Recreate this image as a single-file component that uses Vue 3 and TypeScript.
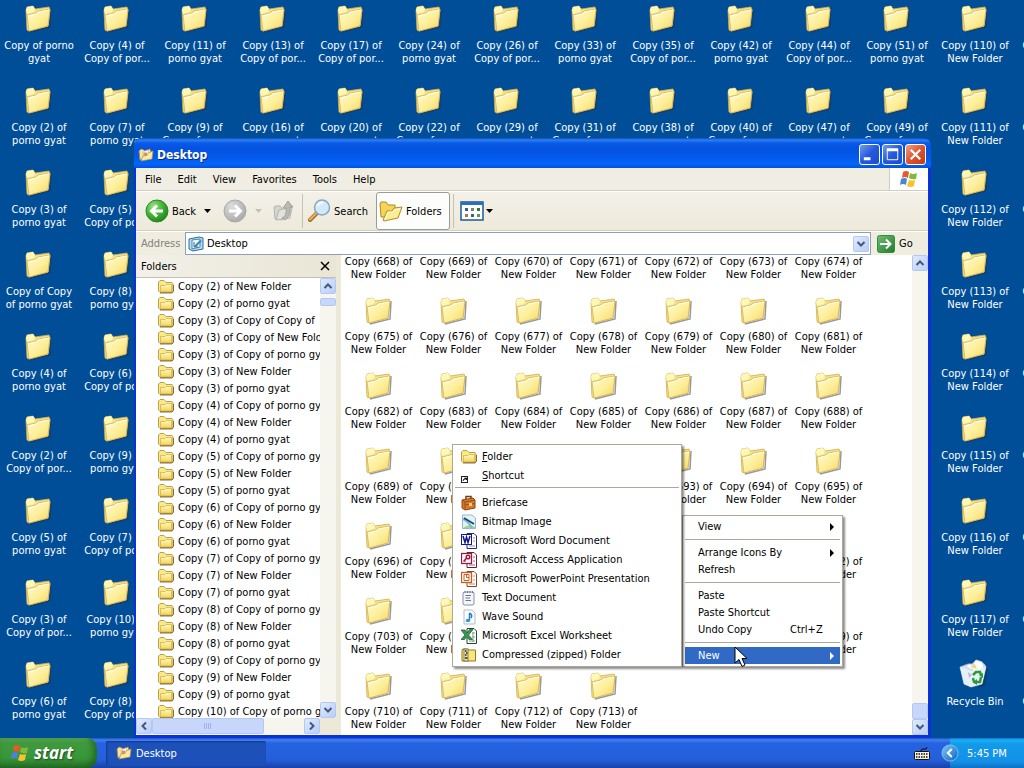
<script setup lang="ts">
import { ref } from 'vue'

type Kind = 'pg' | 'cp' | 'nf'

const second: Record<Kind, string> = { pg: 'porno gyat', cp: 'Copy of por...', nf: 'New Folder' }

function label(n: number, kind: Kind): string {
  return `Copy (${n}) of\n${second[kind]}`
}

const desktopColumns: string[][] = [
  [
    'Copy of porno\ngyat',
    label(2, 'pg'),
    label(3, 'pg'),
    'Copy of Copy\nof porno gyat',
    label(4, 'pg'),
    label(2, 'cp'),
    label(5, 'pg'),
    label(3, 'cp'),
    label(6, 'pg'),
  ],
  [
    label(4, 'cp'),
    label(7, 'pg'),
    label(5, 'cp'),
    label(8, 'pg'),
    label(6, 'cp'),
    label(9, 'pg'),
    label(7, 'cp'),
    label(10, 'pg'),
    label(8, 'cp'),
  ],
  [label(11, 'pg'), label(9, 'cp')],
  [label(13, 'cp'), label(16, 'pg')],
  [label(17, 'cp'), label(20, 'pg')],
  [label(24, 'pg'), label(22, 'cp')],
  [label(26, 'cp'), label(29, 'pg')],
  [label(33, 'pg'), label(31, 'cp')],
  [label(35, 'cp'), label(38, 'pg')],
  [label(42, 'pg'), label(40, 'cp')],
  [label(44, 'cp'), label(47, 'pg')],
  [label(51, 'pg'), label(49, 'cp')],
  [110, 111, 112, 113, 114, 115, 116, 117].map((n) => label(n, 'nf')).concat('Recycle Bin'),
  [11, 12, 13, 14, 15, 16, 17, 18, 19].map((n) => label(n, 'nf')),
]

const tree: string[] = [
  'Copy (2) of New Folder',
  'Copy (2) of porno gyat',
  'Copy (3) of Copy of Copy of',
  'Copy (3) of Copy of New Folder',
  'Copy (3) of Copy of porno gyat',
  'Copy (3) of New Folder',
  'Copy (3) of porno gyat',
]
for (let n = 4; n <= 9; n++) {
  tree.push(`Copy (${n}) of Copy of porno gyat`, `Copy (${n}) of New Folder`, `Copy (${n}) of porno gyat`)
}
tree.push('Copy (10) of Copy of porno gyat')

const files = Array.from({ length: 46 }, (_, i) => label(668 + i, 'nf'))

const menus = ['File', 'Edit', 'View', 'Favorites', 'Tools', 'Help']
const address = ref('Desktop')

const newItems = [
  { icon: 'i-briefcase', text: 'Briefcase' },
  { icon: 'i-bitmap', text: 'Bitmap Image' },
  { icon: 'i-word', text: 'Microsoft Word Document' },
  { icon: 'i-access', text: 'Microsoft Access Application' },
  { icon: 'i-ppt', text: 'Microsoft PowerPoint Presentation' },
  { icon: 'i-text', text: 'Text Document' },
  { icon: 'i-wave', text: 'Wave Sound' },
  { icon: 'i-excel', text: 'Microsoft Excel Worksheet' },
  { icon: 'i-zip', text: 'Compressed (zipped) Folder' },
]
</script>

<template>
  <div class="screen">
    <svg class="defs" aria-hidden="true">
      <defs>
        <linearGradient id="g-folder" x1="0" y1="0" x2="1" y2="1">
          <stop offset="0" stop-color="#fffcd2" />
          <stop offset="0.55" stop-color="#fdee98" />
          <stop offset="1" stop-color="#f6d564" />
        </linearGradient>
        <linearGradient id="g-small" x1="0" y1="0" x2="0" y2="1">
          <stop offset="0" stop-color="#fffabc" />
          <stop offset="1" stop-color="#f4d25a" />
        </linearGradient>
        <radialGradient id="g-green" cx="0.35" cy="0.3" r="0.8">
          <stop offset="0" stop-color="#9be58a" />
          <stop offset="0.5" stop-color="#44b336" />
          <stop offset="1" stop-color="#1c7a18" />
        </radialGradient>
        <radialGradient id="g-gray" cx="0.35" cy="0.3" r="0.8">
          <stop offset="0" stop-color="#dedede" />
          <stop offset="1" stop-color="#a4a4a4" />
        </radialGradient>
        <linearGradient id="g-go" x1="0" y1="0" x2="1" y2="1">
          <stop offset="0" stop-color="#6cc070" />
          <stop offset="1" stop-color="#237a2c" />
        </linearGradient>
        <linearGradient id="g-tray" x1="0" y1="0" x2="1" y2="1">
          <stop offset="0" stop-color="#7cc8fa" />
          <stop offset="1" stop-color="#0d62bc" />
        </linearGradient>
        <symbol id="i-folder-big" viewBox="0 0 32 32">
          <path d="M7 29 L27 24 L28 6" fill="none" stroke="#2a3440" stroke-opacity="0.5" stroke-width="1.500" />
          <path d="M3 7 L4 4 L10 3 L12 6 L26 4 L27 7 L25 23 L6 28 L4 27 Z" fill="#f6e186" stroke="#cfae52" stroke-width="0.8" />
          <path d="M3 7 L4 4 L10 3 L12 6 L11 9 L4 11 Z" fill="#fdf8b8" />
          <path d="M4 12 L13 10 L15 8 L27 6 L25 23 L6 28 Z" fill="url(#g-folder)" stroke="#d3b35a" stroke-width="0.8" />
          <path d="M5 13 L13 11 L16 9 L26 7" fill="none" stroke="#fffef0" stroke-width="1" />
        </symbol>
        <symbol id="i-folder" viewBox="0 0 16 16">
          <path d="M0.500 12 V3 L2 1.500 H6 L8 3.500 H14 L15 5 V12 L14 13.500 H2 Z" fill="#fae988" stroke="#b8963c" stroke-width="0.9" />
          <path d="M2.500 13 V6.500 H7 L8 5.500 H13.500 V13 Z" fill="url(#g-small)" stroke="#cfaa48" stroke-width="0.7" />
          <path d="M2 14 H14 L15.500 12.500 V6" fill="none" stroke="#7c6424" stroke-width="0.9" />
        </symbol>
        <symbol id="i-open" viewBox="0 0 16 16">
          <path d="M2 13 L1 4 L3 2 L6 3 L7 4 L12 2 L13 5" fill="#f6e69a" stroke="#a98a35" stroke-width="0.8" />
          <path d="M5 5 L10 3 L11 9 H5 Z" fill="#fff" stroke="#bbb" stroke-width="0.6" />
          <path d="M5.500 5.500 H9 V9 H5.500 Z" fill="#e58a68" />
          <path d="M3 14 L5 9 L9 8.500 L10 6 L15 4 L14 12 Z" fill="#fbeaa4" stroke="#b5933c" stroke-width="0.7" />
        </symbol>
        <symbol id="i-folders" viewBox="0 0 24 24">
          <path d="M2 18 L1 5 L2 3 H7 L9 6 H16 V18 Z" fill="#f5d559" stroke="#b08a24" />
          <path d="M4 21 L8 12 H13 L15 9 L23 8 L19 19 L5 22 Z" fill="#fcec94" stroke="#b08a24" />
          <path d="M6 20 L9 13 H13 L15 11 L21 10" fill="none" stroke="#fffbd8" />
        </symbol>
        <symbol id="i-flag" viewBox="0 0 20 20">
          <path d="M4 3 Q7 1 10 3 L9 9 Q6 7 3 9 Z" fill="#e9572b" />
          <path d="M11 4 Q14 6 18 4 L17 10 Q13 11 10 9 Z" fill="#84b83c" />
          <path d="M2 10 Q6 8 8 10 L7 16 Q4 14 1 16 Z" fill="#4a83dc" />
          <path d="M10 11 Q13 12 16 11 L15 17 Q11 19 8 17 Z" fill="#f6c22e" />
        </symbol>
        <symbol id="i-back" viewBox="0 0 24 24">
          <circle cx="12" cy="12" r="11" fill="url(#g-green)" stroke="#2b8a24" />
          <path d="M18 12 H7 M12 6.5 L6.5 12 L12 17.5" fill="none" stroke="#fff" stroke-width="3" />
        </symbol>
        <symbol id="i-forward" viewBox="0 0 24 24">
          <circle cx="12" cy="12" r="11" fill="url(#g-gray)" stroke="#ababab" />
          <path d="M6 12 H17 M12 6.5 L17.5 12 L12 17.5" fill="none" stroke="#fff" stroke-width="3" />
        </symbol>
        <symbol id="i-up" viewBox="0 0 24 24">
          <path d="M3 20 L2 8 L4 7 L8 7 L10 9 V21 Z" fill="#d6d6d0" stroke="#b4b4ae" />
          <path d="M4 21 L7 11 L20 8 L18 19 Z" fill="#e2e2dc" stroke="#b4b4ae" />
          <path d="M10 19 Q15 17 14 9 H11 L16 2 L21 8 H18 Q19 17 13 21 Z" fill="#b9b9b4" stroke="#9a9a96" stroke-width="0.8" />
        </symbol>
        <symbol id="i-search" viewBox="0 0 24 24">
          <path d="M10 14 L3 21" stroke="#a86a22" stroke-width="4" stroke-linecap="round" />
          <path d="M10 13.5 L3 20.5" stroke="#e9b25f" stroke-width="2" stroke-linecap="round" />
          <circle cx="15" cy="8.500" r="7.500" fill="#cfeafa" stroke="#8aa5bd" stroke-width="1.500" />
          <path d="M10.500 7 Q12 3.500 16 3.500" fill="none" stroke="#fff" stroke-width="2" />
        </symbol>
        <symbol id="i-views" viewBox="0 0 24 20">
          <rect x="1" y="1" width="22" height="18" fill="#fff" stroke="#1b5a94" stroke-width="1.500" />
          <rect x="1" y="1" width="22" height="3" fill="#2a72b8" />
          <path d="M5 7 h3 v3 h-3 z M11 13 h3 v3 h-3 z" fill="#3f5c9a" />
          <path d="M11 7 h3 v3 h-3 z M17 13 h3 v3 h-3 z" fill="#6a8c76" />
          <path d="M17 7 h3 v3 h-3 z" fill="#2d7d2d" />
          <path d="M5 13 h3 v3 h-3 z" fill="#c4703c" />
        </symbol>
        <symbol id="i-desk" viewBox="0 0 16 16">
          <path d="M1 3 L11 1 L15 2 V13 L5 15 L1 13 Z" fill="#b8dcf2" stroke="#2c6e98" />
          <path d="M4 4 L12 3 V11 L4 13 Z" fill="#f2faff" stroke="#2c6e98" stroke-width="0.8" />
          <path d="M6 10 L12 4 L14 5 L8 11 Z" fill="#3c86b4" />
          <path d="M6 6 V11 H10" fill="none" stroke="#2c6e98" />
        </symbol>
        <symbol id="i-go" viewBox="0 0 18 18">
          <rect x="0.5" y="0.5" width="17" height="17" rx="2" fill="url(#g-go)" stroke="#3a8a42" />
          <path d="M3 9 H13 M9 4.500 L13.500 9 L9 13.500" fill="none" stroke="#fff" stroke-width="2" />
        </symbol>
        <symbol id="i-bin" viewBox="0 0 32 32">
          <path d="M25 8 L29 9 L26 27 L19 29" fill="#16304a" fill-opacity="0.5" />
          <path d="M1 8 L9 5 L13 5 L17 1 L23 3 L26 6 L27 8 L23 25 L12 28 L5 25 Z" fill="#d5e4ee" stroke="#a6bccb" stroke-width="0.8" />
          <path d="M7 8 L10 5 L14 6 L17 1 L23 3 L25 8 L19 13 Z" fill="#fff" stroke="#b8c6d0" stroke-width="0.6" />
          <path d="M11 8 L16 5 L18 10 Z" fill="#f3d489" />
          <path d="M1 8 L12 12 L27 8 L23 25 L12 28 L5 25 Z" fill="#e8f2f8" fill-opacity="0.85" />
          <path d="M9 13 L13 16 L10 19 Z" fill="#c6b4d8" />
          <path d="M14 16 L17 13 L21 13 L22 16 M22 18 L21 23 L18 23 M14 19 L15 23 L17 24" fill="none" stroke="#2c9a3a" stroke-width="2.500" />
          <path d="M20 16 L24 14 L24 19 Z M18 20 L18 26 L14 23 Z" fill="#2c9a3a" />
        </symbol>
        <symbol id="i-shortcut" viewBox="0 0 16 16">
          <rect x="0.5" y="8.500" width="6" height="6" fill="#fff" stroke="#222" />
          <path d="M2 13 Q2 11 4 11 M3.500 10 H5.500 V12 Z" fill="#000" stroke="#000" stroke-width="0.7" />
        </symbol>
        <symbol id="i-briefcase" viewBox="0 0 16 16">
          <path d="M5 4 V1.500 H10 V3.500" fill="none" stroke="#7c3a10" stroke-width="1.500" />
          <path d="M1 5 L12 3 L14 5 V13 L4 15 L1 13 Z" fill="#d9782c" stroke="#8b430f" />
          <path d="M1 5 L4 7 L14 5 M4 7 V15 M4 10 L14 8.500" fill="none" stroke="#9c4e18" />
          <rect x="8" y="8" width="3" height="3" fill="#f6d27c" />
        </symbol>
        <symbol id="i-bitmap" viewBox="0 0 16 16">
          <path d="M1.500 1 H11 L14.500 4 V14.500 H1.500 Z" fill="#e2f2fb" stroke="#9ab6cc" />
          <path d="M2 14 Q7 9 14 13 V14 Z" fill="#a4d488" />
          <path d="M2 5 Q7 7 11 14" fill="none" stroke="#72b8e6" stroke-width="2" />
          <path d="M3 4 L13 10" stroke="#24445c" stroke-width="1.800" />
        </symbol>
        <symbol id="i-word" viewBox="0 0 16 16">
          <path d="M6 0.5 H13 L15.500 3 V15.500 H6 Z" fill="#fff" stroke="#222a70" />
          <path d="M12 5 H14 M12 8 H14 M8 13 H14" stroke="#8a90bc" />
          <rect x="0.5" y="1.500" width="10" height="10" fill="#fff" stroke="#17188c" />
          <path d="M2 3 L4 9.500 L5.500 4 L7 9.500 L9 3" fill="none" stroke="#17188c" stroke-width="1.500" />
        </symbol>
        <symbol id="i-access" viewBox="0 0 16 16">
          <path d="M6 0.5 H13 L15.500 3 V15.500 H6 Z" fill="#fff" stroke="#5a2438" />
          <path d="M8 13 H14 M12 5 H14 M12 9 H14" stroke="#b06080" />
          <rect x="0.5" y="1.500" width="10" height="10" fill="#fff" stroke="#a01840" stroke-width="1.300" />
          <circle cx="7" cy="5" r="1.800" fill="none" stroke="#a01840" stroke-width="1.500" />
          <path d="M5.500 6 L2.500 9.500 M3 8 L4.500 9.500" stroke="#a01840" stroke-width="1.300" />
        </symbol>
        <symbol id="i-ppt" viewBox="0 0 16 16">
          <path d="M6 0.5 H13 L15.500 3 V15.500 H6 Z" fill="#fff" stroke="#8c4420" />
          <path d="M8 13 H14 M12 5 H14 M12 9 H14" stroke="#c88860" />
          <rect x="0.5" y="1.500" width="10" height="10" fill="#fff" stroke="#cc5a1c" stroke-width="1.300" />
          <path d="M3 3.500 H8 V9.500 H3 Z M5.500 3.500 V6.500 H8" fill="none" stroke="#cc5a1c" />
        </symbol>
        <symbol id="i-text" viewBox="0 0 16 16">
          <path d="M3 2 H12 L13 3 V14 L12 15 H3 L2 14 V3 Z" fill="#f2f5fa" stroke="#8790a6" />
          <path d="M4 1 V3 M6.500 1 V3 M9 1 V3 M11.500 1 V3" stroke="#6a7590" />
          <path d="M4.500 5.500 H10 M4.500 8 H9 M4.500 10.500 H10" stroke="#6d7590" />
        </symbol>
        <symbol id="i-wave" viewBox="0 0 16 16">
          <path d="M3 1 H11 L14 4 V15 H3 Z" fill="#fafdff" stroke="#b5bcc8" />
          <path d="M8.500 4 V11 M8.500 4 Q12 6 10 9" fill="none" stroke="#2a7fc6" stroke-width="1.500" />
          <ellipse cx="7" cy="11.500" rx="2.200" ry="1.700" fill="#2a9bd6" />
        </symbol>
        <symbol id="i-excel" viewBox="0 0 16 16">
          <path d="M6 0.5 H13 L15.500 3 V15.500 H6 Z" fill="#fff" stroke="#24482c" />
          <path d="M11 5 H14 M11 9 H14 M8 13 H14 M12 4 V14" stroke="#7ea488" />
          <path d="M0 2 H4 L6 5 L8.500 1.500 H12 L7.500 7 L11.500 11.500 H8 L5.500 9 L3.500 11.500 H0 L4 7 Z" fill="#3c9656" stroke="#1d6434" stroke-width="0.8" />
        </symbol>
        <symbol id="i-zip" viewBox="0 0 16 16">
          <path d="M1 14 V3 L2 2 H6 L8 3 H14.500 V14 Z" fill="#f9e678" stroke="#97761c" />
          <rect x="3" y="2" width="4" height="12" fill="#efe8b8" stroke="#5c5226" stroke-width="0.7" />
          <path d="M4 4 H5.500 M5 6 H6.500 M4 8 H5.500 M4 11 H6.500" stroke="#222" stroke-width="1.300" />
        </symbol>
        <symbol id="i-keyboard" viewBox="0 0 16 16">
          <path d="M7 6 V5 L9 4 L12 4 L13 2" fill="none" stroke="#111" />
          <rect x="0.500" y="6.500" width="15" height="8" rx="1" fill="#f5f0dc" stroke="#111" />
          <path d="M2 9 H14 M2 12 H14" stroke="#111" stroke-width="1.500" stroke-dasharray="1.500 1" />
        </symbol>
        <symbol id="i-tray" viewBox="0 0 20 20">
          <circle cx="10" cy="10" r="9" fill="url(#g-tray)" stroke="#8fd0fa" stroke-width="0.8" />
          <path d="M12 5.500 L7.500 10 L12 14.500" fill="none" stroke="#fff" stroke-width="2.200" />
        </symbol>
        <symbol id="i-chev" viewBox="0 0 10 10">
          <path d="M1.500 7 L5 3.500 L8.500 7" fill="none" stroke="#42597c" stroke-width="2" />
        </symbol>
        <symbol id="i-tri" viewBox="0 0 8 8">
          <path d="M2 0 L6 4 L2 8 Z" fill="currentColor" />
        </symbol>
      </defs>
    </svg>

    <main class="desktop">
      <ul v-for="(col, c) in desktopColumns" :key="c" class="desk-col">
        <li v-for="(item, r) in col" :key="r" class="desk-item">
          <svg class="big"><use :href="item === 'Recycle Bin' ? '#i-bin' : '#i-folder-big'" /></svg>
          <span class="caption">{{ item }}</span>
        </li>
      </ul>
    </main>

    <section class="window">
      <header class="titlebar">
        <svg class="small"><use href="#i-open" /></svg>
        <h1>Desktop</h1>
        <button class="cap" aria-label="Minimize"><svg viewBox="0 0 20 20"><path d="M4 14.500 H11" stroke="#fff" stroke-width="3" /></svg></button>
        <button class="cap" aria-label="Maximize"><svg viewBox="0 0 20 20"><path d="M4.500 5 V15.500 H15.500 V5" fill="none" stroke="#fff" /><path d="M4 5 H16" stroke="#fff" stroke-width="3" /></svg></button>
        <button class="cap close" aria-label="Close"><svg viewBox="0 0 20 20"><path d="M5 5 L15 15 M15 5 L5 15" stroke="#fff" stroke-width="2.500" /></svg></button>
      </header>

      <div class="frame">
        <nav class="menubar">
          <button v-for="m in menus" :key="m">{{ m }}</button>
          <span class="brand"><svg class="flag"><use href="#i-flag" /></svg></span>
        </nav>

        <div class="toolbar">
          <button class="tool back"><svg class="mid"><use href="#i-back" /></svg>Back</button>
          <button class="drop" aria-label="Back history"></button>
          <button class="tool fwd" aria-label="Forward"><svg class="mid"><use href="#i-forward" /></svg></button>
          <button class="drop pale" aria-label="Forward history"></button>
          <button class="tool up" aria-label="Up"><svg class="mid"><use href="#i-up" /></svg></button>
          <span class="bar"></span>
          <button class="tool search"><svg class="mid"><use href="#i-search" /></svg>Search</button>
          <button class="tool pressed"><svg class="mid"><use href="#i-folders" /></svg>Folders</button>
          <span class="bar"></span>
          <button class="tool views" aria-label="Views"><svg class="viewicon"><use href="#i-views" /></svg><i class="drop"></i></button>
        </div>

        <div class="address">
          <label for="addr">Address</label>
          <div class="combo">
            <svg class="small"><use href="#i-desk" /></svg>
            <input id="addr" v-model="address" type="text" />
            <button class="sb" aria-label="Show addresses"><svg class="chev down"><use href="#i-chev" /></svg></button>
          </div>
          <button class="go"><svg class="goicon"><use href="#i-go" /></svg>Go</button>
        </div>

        <div class="body">
          <aside class="pane">
            <div class="pane-head">
              <h2>Folders</h2>
              <button aria-label="Close folders pane"><svg viewBox="0 0 10 10"><path d="M1 1 L9 9 M9 1 L1 9" stroke="#000" stroke-width="1.500" /></svg></button>
            </div>
            <div class="pane-body">
              <ul class="tree">
                <li v-for="(t, i) in tree" :key="i"><svg class="small"><use href="#i-folder" /></svg>{{ t }}</li>
              </ul>
              <div class="scroll vertical">
                <button class="sb" aria-label="Scroll up"><svg class="chev"><use href="#i-chev" /></svg></button>
                <span class="thumb tiny"></span>
                <span class="space"></span>
                <button class="sb" aria-label="Scroll down"><svg class="chev down"><use href="#i-chev" /></svg></button>
              </div>
              <div class="scroll horizontal">
                <button class="sb" aria-label="Scroll left"><svg class="chev left"><use href="#i-chev" /></svg></button>
                <span class="thumb wide"></span>
                <span class="space"></span>
                <button class="sb" aria-label="Scroll right"><svg class="chev right"><use href="#i-chev" /></svg></button>
              </div>
              <div class="corner"></div>
            </div>
          </aside>
          <div class="splitter"></div>
          <div class="content">
            <ul class="files">
              <li v-for="f in files" :key="f">
                <svg class="big"><use href="#i-folder-big" /></svg>
                <span class="caption">{{ f }}</span>
              </li>
            </ul>
          </div>
          <div class="scroll vertical">
            <button class="sb" aria-label="Scroll up"><svg class="chev"><use href="#i-chev" /></svg></button>
            <span class="space"></span>
            <span class="thumb block"></span>
            <button class="sb" aria-label="Scroll down"><svg class="chev down"><use href="#i-chev" /></svg></button>
          </div>
        </div>
      </div>
    </section>

    <div class="menus">
      <div class="menu sub">
        <button><svg class="small"><use href="#i-folder" /></svg><span><u>F</u>older</span></button>
        <button><svg class="small"><use href="#i-shortcut" /></svg><span><u>S</u>hortcut</span></button>
        <hr />
        <button v-for="n in newItems" :key="n.text"><svg class="small"><use :href="'#' + n.icon" /></svg><span>{{ n.text }}</span></button>
      </div>
      <div class="menu ctx">
        <button><span>View</span><svg class="tri"><use href="#i-tri" /></svg></button>
        <hr />
        <button><span>Arrange Icons By</span><svg class="tri"><use href="#i-tri" /></svg></button>
        <button><span>Refresh</span></button>
        <hr />
        <button><span>Paste</span></button>
        <button><span>Paste Shortcut</span></button>
        <button><span>Undo Copy</span><kbd>Ctrl+Z</kbd></button>
        <hr />
        <button class="on"><span>New</span><svg class="tri"><use href="#i-tri" /></svg></button>
        <svg class="cursor" viewBox="0 0 14 22"><path d="M1 1 V17 L5 13.500 L8 20.500 L11 19 L8 12.500 H13 Z" fill="#fff" stroke="#000" /></svg>
      </div>
    </div>

    <footer class="taskbar">
      <button class="start"><svg class="flag"><use href="#i-flag" /></svg>start</button>
      <button class="task"><svg class="small"><use href="#i-open" /></svg>Desktop</button>
      <svg class="small kb"><use href="#i-keyboard" /></svg>
      <div class="tray">
        <svg class="traybtn"><use href="#i-tray" /></svg>
        <time>5:45 PM</time>
      </div>
    </footer>
  </div>
</template>

<style>
body {
  margin: 0;
  overflow: hidden;
}
</style>

<style scoped>
.screen {
  position: relative;
  display: flex;
  flex-direction: column;
  height: 100vh;
  overflow: hidden;
  background: #004e98;
  color: #000;
  font: 11px/13px Tahoma, "DejaVu Sans Condensed", "DejaVu Sans", sans-serif;
}
.defs {
  position: absolute;
  width: 0;
  height: 0;
}
ul {
  margin: 0;
  padding: 0;
  list-style: none;
}
button {
  margin: 0;
  padding: 0;
  border: 0;
  background: none;
  color: inherit;
  font: inherit;
}
svg {
  flex: none;
  display: block;
}
.small { width: 16px; height: 16px; }
.mid { width: 24px; height: 24px; }
.big { width: 32px; height: 32px; }
.flag { width: 20px; height: 20px; }

.desktop {
  flex: 1;
  min-height: 0;
  display: flex;
  overflow: hidden;
}
.desk-col {
  flex: none;
  width: 78px;
}
.desk-item {
  display: flex;
  flex-direction: column;
  align-items: center;
  gap: 4px;
  height: 79px;
  padding-top: 3px;
  color: #fff;
}
.caption {
  white-space: pre;
  text-align: center;
}

.window {
  position: absolute;
  top: 138px;
  left: 134px;
  right: 93px;
  bottom: 30px;
  display: flex;
  flex-direction: column;
  border-radius: 8px 8px 0 0;
  background: #0a32d8;
  overflow: hidden;
}
.titlebar {
  display: flex;
  align-items: center;
  gap: 2px;
  height: 30px;
  padding: 3px 5px 0 4px;
  box-sizing: border-box;
  background: linear-gradient(#0a4cc4 0, #2c80f0 2px, #0a5be8 5px, #0453e0 10px, #0457e8 18px, #0466fb 26px, #0352dc 30px);
}
.titlebar h1 {
  flex: 1;
  margin: 0;
  padding-left: 1px;
  color: #fff;
  font: bold 12px/16px "Trebuchet MS", "DejaVu Sans Condensed", sans-serif;
  text-shadow: 1px 1px #0a2c80;
}
.cap {
  width: 21px;
  height: 21px;
  box-sizing: border-box;
  border: 1px solid #fff;
  border-radius: 3px;
  background: linear-gradient(135deg, #6f9cf2, #2559dc 50%, #1c4bd0);
}
.close {
  background: linear-gradient(135deg, #f0a088, #e0522c 50%, #c23c14);
}
.frame {
  flex: 1;
  min-height: 0;
  display: flex;
  flex-direction: column;
  margin: 0 3px 3px 2px;
  background: #fff;
}
.menubar {
  display: flex;
  align-items: stretch;
  height: 22px;
  padding-left: 1px;
  border-bottom: 1px solid #d0cdc0;
  background: #f0eee3;
}
.menubar button {
  padding: 0 8px;
}
.brand {
  display: flex;
  align-items: center;
  justify-content: center;
  width: 38px;
  margin-left: auto;
  border-left: 1px solid #d0cdbf;
  background: #fff;
}
.toolbar {
  display: flex;
  align-items: center;
  height: 40px;
  padding-left: 9px;
  box-sizing: border-box;
  border-top: 1px solid #fff;
  border-bottom: 1px solid #d4d0c0;
  background: linear-gradient(#f3f1e8, #edeadb);
}
.tool {
  display: flex;
  align-items: center;
  gap: 4px;
}
.back { width: 59px; gap: 3px; }
.drop {
  width: 7px;
  height: 4px;
  background: #000;
  clip-path: polygon(0 0, 100% 0, 50% 100%);
}
.pale { background: #c4c2b8; }
.fwd { margin-left: 12px; }
.fwd + .drop { margin-left: 8px; }
.up { margin: 0 6px 0 10px; }
.bar {
  width: 1px;
  height: 34px;
  background: #c6c3b4;
}
.search { width: 69px; gap: 3px; margin-left: 4px; }
.pressed {
  width: 74px;
  height: 38px;
  box-sizing: border-box;
  gap: 3px;
  margin-right: 3px;
  padding-left: 2px;
  border: 1px solid #9a9c98;
  border-radius: 3px;
  background: #fdfdfb;
}
.views { margin-left: 6px; gap: 2px; }
.viewicon { width: 24px; height: 20px; }
.address {
  display: flex;
  align-items: center;
  height: 24px;
  box-sizing: border-box;
  padding-left: 5px;
  border-top: 1px solid #fff;
  background: #efede0;
  color: #83827a;
}
.address label { width: 44px; }
.combo {
  flex: 1;
  align-self: stretch;
  display: flex;
  align-items: center;
  min-width: 0;
  padding: 0 1px 0 2px;
  border: 1px solid #8ea0b8;
  background: #fff;
}
.combo input {
  flex: 1;
  min-width: 0;
  margin: 0;
  padding: 0 0 0 3px;
  border: 0;
  outline: 0;
  background: transparent;
  color: #000;
  font: inherit;
}
.go {
  display: flex;
  align-items: center;
  gap: 4px;
  width: 51px;
  margin-left: 6px;
  color: #000;
}
.goicon { width: 18px; height: 18px; }
.body {
  flex: 1;
  min-height: 0;
  display: flex;
}
.pane {
  display: flex;
  flex-direction: column;
  width: 200px;
  min-height: 0;
}
.pane-head {
  display: flex;
  align-items: center;
  justify-content: space-between;
  height: 22px;
  padding: 0 6px 0 5px;
  border-bottom: 1px solid #c4c1b2;
  background: linear-gradient(90deg, #f2f0e8, #e9e6d6);
}
.pane-head h2 {
  margin: 0;
  font: inherit;
}
.pane-head svg { width: 10px; height: 10px; }
.pane-body {
  flex: 1;
  min-height: 0;
  display: grid;
  grid-template: minmax(0, 1fr) 17px / minmax(0, 1fr) 16px;
}
.tree {
  overflow: hidden;
}
.tree li {
  display: flex;
  align-items: center;
  gap: 4px;
  height: 17px;
  padding-left: 22px;
  white-space: nowrap;
}
.corner,
.splitter {
  background: #ece9d8;
}
.splitter {
  width: 5px;
}
.content {
  flex: 1;
  min-width: 0;
  display: flex;
  flex-direction: column;
  justify-content: flex-end;
  overflow: hidden;
}
.files {
  display: grid;
  grid-template-columns: repeat(auto-fill, 75px);
  row-gap: 14px;
  padding-bottom: 4px;
}
.files li {
  display: flex;
  flex-direction: column;
  align-items: center;
  gap: 3px;
}
.scroll {
  display: flex;
  background: #f6f5ee;
}
.vertical {
  flex-direction: column;
  width: 16px;
}
.horizontal { height: 17px; }
.space { flex: 1; }
.sb {
  flex: none;
  display: flex;
  align-items: center;
  justify-content: center;
  width: 16px;
  height: 16px;
  box-sizing: border-box;
  border: 1px solid #b4c8f4;
  border-radius: 2px;
  background: linear-gradient(135deg, #e0eafd, #b9cdf8);
}
.chev { width: 10px; height: 10px; }
.down { transform: rotate(180deg); }
.left { transform: rotate(-90deg); }
.right { transform: rotate(90deg); }
.thumb {
  box-sizing: border-box;
  border: 1px solid #b4c8f4;
  border-radius: 2px;
  background: #c8d6fb;
}
.tiny { height: 8px; margin-top: 4px; }
.block { height: 16px; }
.wide {
  width: 112px;
  height: 16px;
  background: repeating-linear-gradient(90deg, #9cb4ec 0, #9cb4ec 1px, transparent 1px, transparent 2px) center / 8px 6px no-repeat, #c8d6fb;
}

.menus {
  position: absolute;
  right: 181px;
  bottom: 101px;
  display: flex;
  align-items: flex-end;
}
.menu {
  display: flex;
  flex-direction: column;
  box-sizing: border-box;
  padding: 2px;
  border: 1px solid #aca899;
  background: #fff;
  box-shadow: 2px 2px 2px rgba(0, 0, 0, 0.45);
}
.menu button {
  display: flex;
  align-items: center;
  text-align: left;
  white-space: nowrap;
}
.menu hr {
  width: 100%;
  margin: 0;
  border: 0;
  box-sizing: border-box;
  background: linear-gradient(#aca899, #aca899) center / 100% 1px no-repeat;
}
.sub {
  z-index: 1;
  width: 230px;
}
.sub button {
  gap: 5px;
  height: 19px;
  padding-left: 6px;
}
.menu.sub hr {
  height: 8px;
  background-position: 0 2px;
}
.ctx {
  position: relative;
  width: 161px;
}
.ctx button {
  justify-content: space-between;
  height: 17px;
  padding: 0 4px 0 13px;
}
.ctx hr { height: 9px; }
.ctx .on {
  background: #316ac5;
  color: #fff;
}
.ctx kbd {
  width: 46px;
  font: inherit;
}
.tri { width: 8px; height: 8px; }
.cursor {
  position: absolute;
  left: 51px;
  bottom: -2px;
  width: 14px;
  height: 22px;
}

.taskbar {
  flex: none;
  display: flex;
  align-items: center;
  height: 30px;
  background: linear-gradient(#1f4fc4 0, #3f82f0 2px, #2663e0 5px, #245edb 22px, #1941a5 30px);
  color: #fff;
}
.start {
  display: flex;
  align-items: center;
  gap: 4px;
  width: 97px;
  height: 30px;
  padding-left: 10px;
  border-radius: 0 10px 10px 0;
  background: linear-gradient(#5aa855 0, #3f9a3e 5px, #389638 20px, #2a7a2c 30px);
  box-shadow: inset -4px -2px 6px rgba(16, 80, 20, 0.6);
  font: italic bold 17px/24px "Open Sans", "Noto Sans", sans-serif;
  text-shadow: 1px 1px 2px #1c4a1c;
}
.task {
  display: flex;
  align-items: center;
  gap: 4px;
  width: 160px;
  height: 25px;
  margin-left: 9px;
  padding-left: 10px;
  border-radius: 2px;
  background: #1e50ba;
  box-shadow: inset 1px 1px 2px #123a8c;
}
.kb { margin: 0 11px 0 auto; }
.tray {
  display: flex;
  align-items: center;
  gap: 8px;
  width: 83px;
  height: 30px;
  background: linear-gradient(#1272d4 0, #18b0f4 2px, #129ae8 6px, #1290e8 24px, #0d70c4 30px) 9px 0 no-repeat;
}
.traybtn { width: 18px; height: 18px; }
</style>
